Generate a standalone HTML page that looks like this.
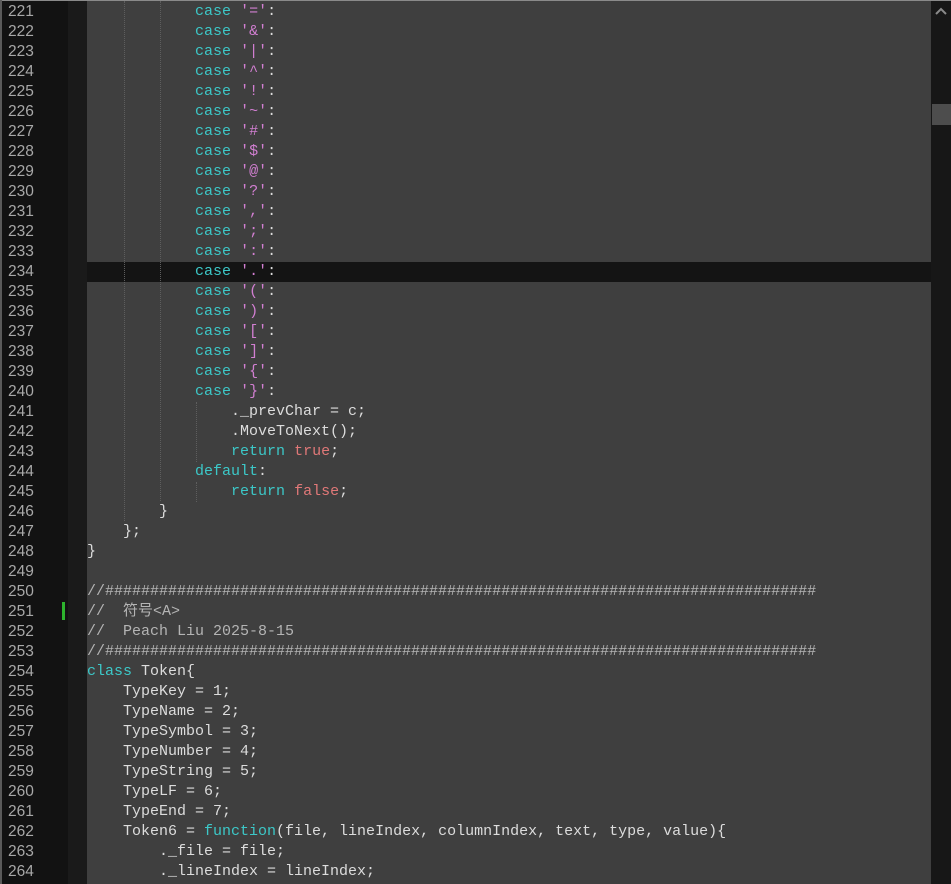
<!DOCTYPE html>
<html><head><meta charset="utf-8"><style>
body{margin:0;width:951px;height:884px;overflow:hidden;background:#3f3f3f;position:relative;font-family:"Liberation Mono","Noto Sans CJK SC",monospace;font-size:15px}
#top{position:absolute;left:0;top:0;width:951px;height:1px;background:#8a8a8a}
#lb{position:absolute;left:0;top:0;width:2px;height:884px;background:#5a5a5a}
#gut{position:absolute;left:2px;top:1px;width:66px;height:883px;background:#121212}
#gut2{position:absolute;left:68px;top:1px;width:19px;height:883px;background:#1a1a1a}
#cur{position:absolute;left:87px;top:262px;width:844px;height:20px;background:#141414}
#sb{position:absolute;left:931px;top:1px;width:20px;height:883px;background:#171717}
#thumb{position:absolute;left:932px;top:104px;width:19px;height:21px;background:#4d4d4d}
.g{position:absolute;width:0;border-left:1px dotted #5e5e5e}
.ln{position:absolute;left:8px;color:#a8a8a8;line-height:20px;height:20px;font-family:"Liberation Sans",sans-serif;font-size:15.5px}
.cd{position:absolute;left:87px;color:#dcdcdc;line-height:20px;height:20px;white-space:pre}
.k{color:#3cc8c8}.s{color:#d27fd2}.b{color:#e07878}.c{color:#b4b4b4}
#mk{position:absolute;left:62px;top:602px;width:3px;height:18px;background:#2db32d}
</style></head><body>
<div id="top"></div><div id="gut"></div><div id="lb"></div><div id="gut2"></div>
<div id="cur"></div>
<div class="g" style="left:124px;top:1px;height:520px"></div>
<div class="g" style="left:160px;top:1px;height:500px"></div>
<div class="g" style="left:196px;top:402px;height:60px"></div>
<div class="g" style="left:196px;top:482px;height:20px"></div>
<div id="mk"></div>
<div id="sb"></div><div id="thumb"></div>
<svg style="position:absolute;left:935px;top:7px" width="12" height="8"><path d="M1 7 L6 2 L11 7" stroke="#8a8a8a" stroke-width="2" fill="none"/></svg>
<div id="lines"></div>
<script>
const L=[
"            <k>case</k> <s>'='</s>:",
"            <k>case</k> <s>'&amp;'</s>:",
"            <k>case</k> <s>'|'</s>:",
"            <k>case</k> <s>'^'</s>:",
"            <k>case</k> <s>'!'</s>:",
"            <k>case</k> <s>'~'</s>:",
"            <k>case</k> <s>'#'</s>:",
"            <k>case</k> <s>'$'</s>:",
"            <k>case</k> <s>'@'</s>:",
"            <k>case</k> <s>'?'</s>:",
"            <k>case</k> <s>','</s>:",
"            <k>case</k> <s>';'</s>:",
"            <k>case</k> <s>':'</s>:",
"            <k>case</k> <s>'.'</s>:",
"            <k>case</k> <s>'('</s>:",
"            <k>case</k> <s>')'</s>:",
"            <k>case</k> <s>'['</s>:",
"            <k>case</k> <s>']'</s>:",
"            <k>case</k> <s>'{'</s>:",
"            <k>case</k> <s>'}'</s>:",
"                ._prevChar = c;",
"                .MoveToNext();",
"                <k>return</k> <b>true</b>;",
"            <k>default</k>:",
"                <k>return</k> <b>false</b>;",
"        }",
"    };",
"}",
"",
"<c>//###############################################################################</c>",
"<c>//  符号&lt;A&gt;</c>",
"<c>//  Peach Liu 2025-8-15</c>",
"<c>//###############################################################################</c>",
"<k>class</k> Token{",
"    TypeKey = 1;",
"    TypeName = 2;",
"    TypeSymbol = 3;",
"    TypeNumber = 4;",
"    TypeString = 5;",
"    TypeLF = 6;",
"    TypeEnd = 7;",
"    Token6 = <k>function</k>(file, lineIndex, columnIndex, text, type, value){",
"        ._file = file;",
"        ._lineIndex = lineIndex;"];
let h="";
L.forEach((t,i)=>{const y=2+i*20;
t=t.replace(/<(k|s|b|c)>/g,'<span class="$1">').replace(/<\/(k|s|b|c)>/g,'</span>');
h+=`<div class="ln" style="top:${y}px">${221+i}</div><div class="cd" style="top:${y}px">${t}</div>`;});
document.getElementById('lines').innerHTML=h;
</script>
</body></html>
